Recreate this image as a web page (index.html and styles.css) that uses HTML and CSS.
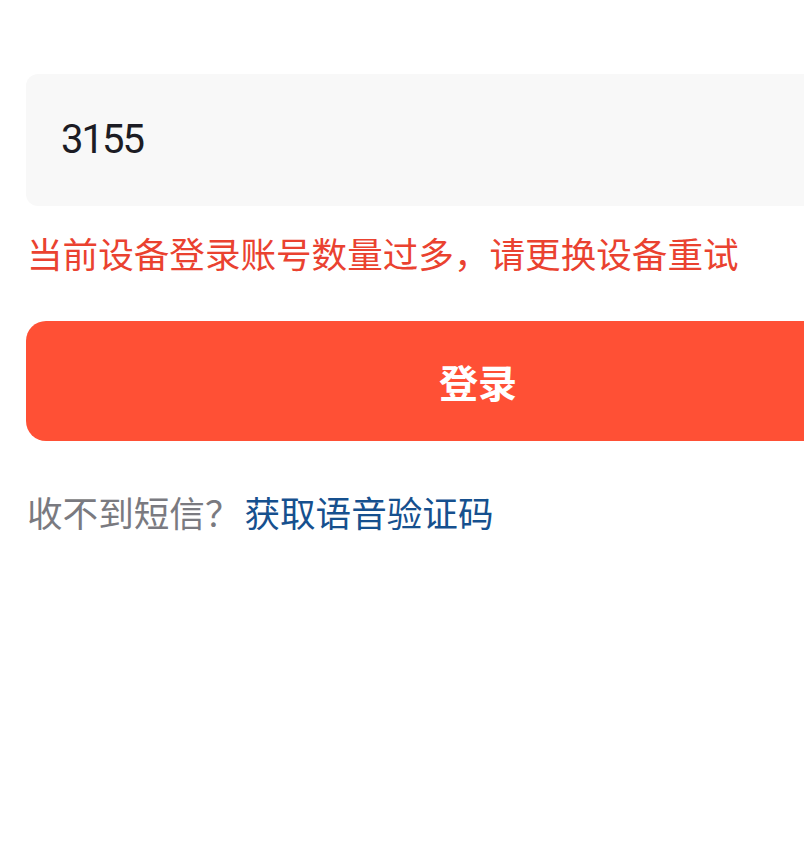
FILE: index.html
```html
<!DOCTYPE html>
<html lang="zh-CN">
<head>
<meta charset="utf-8">
<title>登录</title>
<link rel="stylesheet" href="styles.css">
</head>
<body>
<main class="page">
  <div class="code-field">
    <span class="code-value">3155</span>
  </div>
  <p class="error-msg">当前设备登录账号数量过多，请更换设备重试</p>
  <button class="login-btn" type="button">登录</button>
  <p class="help">收不到短信？<a class="voice-link" href="#">获取语音验证码</a></p>
</main>
</body>
</html>
```
FILE: styles.css
```css
html, body {
  margin: 0;
  padding: 0;
  background: #ffffff;
  overflow: hidden;
}

body {
  width: 804px;
  height: 858px;
  font-family: "Noto Sans CJK SC", "Noto Sans", sans-serif;
}

.page {
  width: 904px;
  margin-left: 26px;
  padding-top: 74px;
  display: flex;
  flex-direction: column;
}

.code-field {
  height: 132px;
  background: #f8f8f8;
  border-radius: 12px;
  display: flex;
  align-items: center;
  padding-left: 35px;
  box-sizing: border-box;
}

.code-value {
  font-family: Roboto, "Noto Sans", sans-serif;
  font-size: 40px;
  letter-spacing: -2px;
  color: #1c1c24;
  line-height: 1;
}

.error-msg {
  margin: 22px 0 0 1px;
  font-size: 35.6px;
  line-height: 49px;
  color: #ea4230;
}

.login-btn {
  margin-top: 44px;
  height: 120px;
  border: none;
  border-radius: 20px;
  background: #ff5035;
  color: #ffffff;
  font-family: "Noto Sans CJK SC", sans-serif;
  font-size: 39px;
  font-weight: 700;
  padding: 0;
}

.help {
  margin: 46px 0 0 1px;
  font-size: 35.6px;
  line-height: 49px;
  color: #7a7a80;
}

.voice-link {
  color: #16508e;
  text-decoration: none;
  margin-left: 4px;
}
```
